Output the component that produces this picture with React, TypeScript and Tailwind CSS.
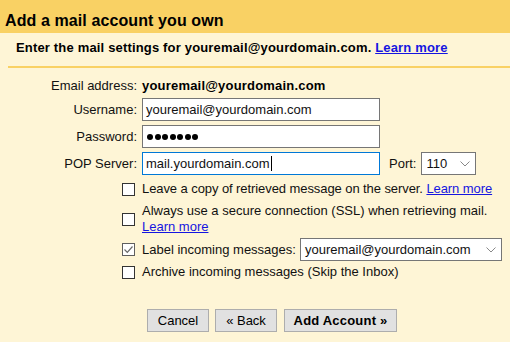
import React from 'react'

const font = "font-['Liberation_Sans',Arial,sans-serif]"

function Chevron() {
  return (
    <svg width="10" height="6" viewBox="0 0 10 6" className="shrink-0">
      <path d="M0.5 0.5 L5 5 L9.5 0.5" fill="none" stroke="#7a7a7a" strokeWidth="0.9" />
    </svg>
  )
}

function Box({ checked = false }: { checked?: boolean }) {
  return (
    <span
      className={`flex h-[13px] w-[13px] shrink-0 items-center justify-center bg-white border ${
        checked ? 'border-[#5f5f5f]' : 'border-[#333333]'
      }`}
    >
      {checked && (
        <svg width="11" height="11" viewBox="0 0 11 11">
          <path d="M1.5 5.5 L4.3 8.3 L9.5 2.5" fill="none" stroke="#6a6a6a" strokeWidth="1.2" />
        </svg>
      )}
    </span>
  )
}

function Field({ label, children }: { label: string; children: React.ReactNode }) {
  return (
    <div className="flex items-center">
      <div className="w-[137px] text-right">{label}</div>
      <div className="ml-[5px] flex items-center">{children}</div>
    </div>
  )
}

const inputBox = 'flex h-[23px] items-center bg-white px-[3px]'

function LearnMore() {
  return <a className="text-[#1515e0] underline cursor-pointer">Learn more</a>
}

export default function App() {
  return (
    <div className={`${font} w-[510px] h-[342px] bg-[#fef5d6] text-[13px] leading-[16px] text-[#111]`}>
      {/* Header */}
      <div className="h-[33px] bg-[#f9d164] pl-[5px] pt-[12px]">
        <h1 className="text-[16px] leading-[18px] font-bold text-black tracking-[0.1px]">Add a mail account you own</h1>
      </div>

      {/* Sub header */}
      <div className="mt-[7px] ml-[8px] border-b-2 border-[#f9d164] pl-[8px] pb-[10px]">
        <p className="font-bold text-black tracking-[0.17px]">
          Enter the mail settings for youremail@yourdomain.com. <LearnMore />
        </p>
      </div>

      {/* Server fields */}
      <div className="mt-[10px] flex flex-col">
        <Field label="Email address:">
          <span className="font-bold text-black tracking-[0.2px]">youremail@yourdomain.com</span>
        </Field>
        <div className="mt-[4px]">
          <Field label="Username:">
            <div className={`${inputBox} w-[238px] border border-[#767676]`}>youremail@yourdomain.com</div>
          </Field>
        </div>
        <div className="mt-[4px]">
          <Field label="Password:">
            <div className={`${inputBox} w-[238px] border border-[#767676] gap-[1.5px] pl-[4px]`}>
              {[0, 1, 2, 3, 4, 5, 6].map((i) => (
                <span key={i} className="h-[6px] w-[6px] rounded-full bg-black" />
              ))}
            </div>
          </Field>
        </div>
        <div className="mt-[4px]">
          <Field label="POP Server:">
            <div className={`${inputBox} w-[238px] border border-[#0078d7]`}>
              mail.yourdomain.com
              <span className="ml-px h-[15px] w-px bg-black" />
            </div>
            <span className="ml-[9px]">Port:</span>
            <div className={`${inputBox} ml-[5px] w-[55px] border border-[#767676] justify-between pl-[4px] pr-[5px]`}>
              110
              <Chevron />
            </div>
          </Field>
        </div>

        {/* Options */}
        <div className="mt-[6px] flex items-center pl-[122px] whitespace-nowrap">
          <Box />
          <span className="ml-[7px] tracking-[-0.08px]">
            Leave a copy of retrieved message on the server. <LearnMore />
          </span>
        </div>
        <div className="mt-[6px] flex items-center pl-[122px] whitespace-nowrap">
          <Box />
          <span className="ml-[7px]">
            Always use a secure connection (SSL) when retrieving mail.
            <br />
            <LearnMore />
          </span>
        </div>
        <div className="mt-[3px] flex items-center pl-[122px] whitespace-nowrap">
          <Box checked />
          <span className="ml-[7px]">Label incoming messages:</span>
          <div className={`${inputBox} ml-[4px] w-[202px] border border-[#767676] justify-between pl-[4px] pr-[5px]`}>
            youremail@yourdomain.com
            <Chevron />
          </div>
        </div>
        <div className="mt-[3px] flex items-center pl-[122px] whitespace-nowrap">
          <Box />
          <span className="ml-[7px]">Archive incoming messages (Skip the Inbox)</span>
        </div>

        {/* Buttons */}
        <div className="mt-[29px] flex pl-[147px] gap-[6px] text-black">
          <button className="h-[23px] w-[62px] border border-[#adadad] bg-[#e1e1e1]">Cancel</button>
          <button className="h-[23px] w-[62px] border border-[#adadad] bg-[#e1e1e1]">« Back</button>
          <button className="ml-px h-[23px] w-[113px] border border-[#adadad] bg-[#e1e1e1] font-bold tracking-[0.2px]">
            Add Account »
          </button>
        </div>
      </div>
    </div>
  )
}
